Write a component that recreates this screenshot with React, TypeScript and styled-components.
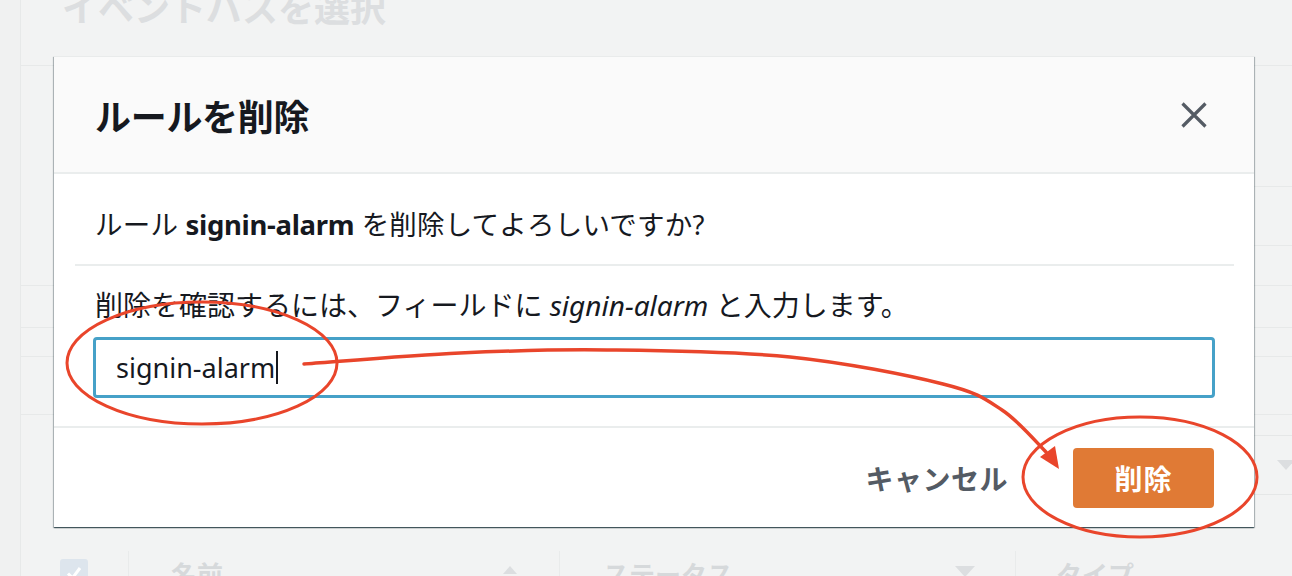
import React from "react";
import styled, { createGlobalStyle } from "styled-components";

const GlobalStyle = createGlobalStyle`
  html, body { margin: 0; padding: 0; }
  body {
    background: #f2f3f3;
    font-family: "Noto Sans", "Noto Sans CJK JP", sans-serif;
    color: #16191f;
  }
  * { box-sizing: border-box; }
`;

const Stage = styled.div`
  position: relative;
  width: 1292px;
  height: 576px;
  overflow: hidden;
  background: #f2f3f3;
`;

/* ---------- faded page behind the dialog ---------- */
const Backdrop = styled.div`
  display: flex;
  height: 100%;
`;

const Rail = styled.div`
  width: 21px;
  flex: none;
  background: #f0f1f1;
  border-right: 1px solid #e7e9e9;
`;

const Content = styled.div`
  flex: 1;
  display: flex;
  flex-direction: column;
  min-width: 0;
`;

const Card = styled.section<{ $h?: number; $top?: boolean }>`
  display: flex;
  flex-direction: column;
  ${(p) => (p.$h ? `height: ${p.$h}px; flex: none;` : "flex: 1;")}
  border-bottom: ${(p) => (p.$top ? "1px solid #e7e9e9" : "none")};
  border-top: ${(p) => (p.$top ? "none" : "1px solid #e7e9e9")};
`;

const CardGap = styled.div`
  height: 41px;
  flex: none;
`;

const FadedTitle = styled.div`
  flex: none;
  border-bottom: 1px solid #e7e9e9;
  padding-left: 41px;
  font-family: "Noto Sans CJK JP", sans-serif;
  font-weight: 700;
  font-size: 36px;
  line-height: 40px;
  color: #dcdee0;
  margin-top: -14px;
  height: 80px;
`;

const FadedRow = styled.div<{ $h: number; $inset?: number }>`
  height: ${(p) => p.$h}px;
  flex: none;
  margin-left: ${(p) => p.$inset ?? 40}px;
  border-bottom: 1px solid #e7e9e9;
`;

const Toolbar = styled.div`
  display: flex;
  justify-content: flex-end;
  padding-top: 20px;
  height: 136px;
  flex: none;
`;

const FadedSelect = styled.div`
  width: 600px;
  height: 60px;
  margin-right: -40px;
  border: 1px solid #e5e7e7;
  display: flex;
  align-items: center;
  justify-content: flex-end;
  padding-right: 36px;
`;

const Caret = styled.span<{ $up?: boolean; $size?: number }>`
  width: 0;
  height: 0;
  border-left: ${(p) => (p.$size ?? 9)}px solid transparent;
  border-right: ${(p) => (p.$size ?? 9)}px solid transparent;
  ${(p) =>
    p.$up
      ? `border-bottom: ${Math.round((p.$size ?? 9) * 1.1)}px solid #dcdee0;`
      : `border-top: ${Math.round((p.$size ?? 9) * 1.1)}px solid #dcdee0;`}
`;

const TableHead = styled.div`
  display: flex;
  flex: 1;
`;

const HeadCell = styled.div<{ $w?: number; $pl: number; $pr?: number; $divider?: boolean }>`
  ${(p) => (p.$w ? `width: ${p.$w}px; flex: none;` : "flex: 1;")}
  padding: 8px ${(p) => p.$pr ?? 0}px 0 ${(p) => p.$pl}px;
  border-left: ${(p) => (p.$divider ? "1px solid #e9ebeb" : "none")};
  display: flex;
  align-items: flex-start;
  justify-content: space-between;
  font-family: "Noto Sans CJK JP", sans-serif;
  font-weight: 700;
  font-size: 26px;
  line-height: 30px;
  color: #d6d9db;
`;

const CaretSlot = styled.span`
  padding-top: 7px;
  display: flex;
`;

const FadedCheck = styled.span`
  width: 28px;
  height: 28px;
  border-radius: 3px;
  background: #dde5ed;
  display: flex;
  align-items: center;
  justify-content: center;
`;

/* ---------- dialog ---------- */
const Modal = styled.div`
  position: absolute;
  left: 54px;
  top: 56px;
  width: 1200px;
  height: 471px;
  background: #fff;
  display: flex;
  flex-direction: column;
  border-top: 1px solid #e9ebeb;
  box-shadow: 0 1px 1px 0 rgba(0, 28, 36, 0.55), 1px 1px 1px 0 rgba(0, 28, 36, 0.22),
    -1px 1px 1px 0 rgba(0, 28, 36, 0.22);
`;

const ModalHeader = styled.header`
  height: 117px;
  flex: none;
  background: #fafafa;
  border-bottom: 2px solid #eaeded;
  display: flex;
  align-items: center;
  justify-content: space-between;
  padding: 0 47px 0 41px;
`;

const ModalTitle = styled.h2`
  margin: 0;
  font-family: "Noto Sans CJK JP", sans-serif;
  font-weight: 700;
  font-size: 36px;
  line-height: 44px;
  color: #16191f;
  letter-spacing: -0.3px;
`;

const CloseButton = styled.button`
  border: 0;
  padding: 0;
  background: transparent;
  width: 26px;
  height: 26px;
  display: flex;
`;

const ModalBody = styled.div`
  padding: 0 20px 0 21px;
  display: flex;
  flex-direction: column;
`;

const Question = styled.div`
  height: 92px;
  border-bottom: 2px solid #eaeded;
  padding: 33px 0 0 20px;
  font-size: 27.5px;
  line-height: 36px;
  letter-spacing: 0.2px;
  color: #16191f;
`;

const Strong = styled.b`
  font-weight: 700;
  letter-spacing: -0.3px;
`;

const ConfirmBlock = styled.div`
  padding: 21px 0 28px 18px;
  display: flex;
  flex-direction: column;
`;

const ConfirmLabel = styled.div`
  padding-left: 2px;
  font-size: 28px;
  line-height: 36px;
  color: #16191f;
`;

const Em = styled.i`
  font-style: italic;
`;

const InputBox = styled.div`
  margin-top: 14px;
  width: 1122px;
  height: 61px;
  border: 3px solid #46a1c8;
  border-radius: 4px;
  padding-left: 20px;
  display: flex;
  align-items: center;
  font-size: 27px;
  color: #16191f;
`;

const TextCaret = styled.span`
  width: 1.5px;
  height: 33px;
  background: #16191f;
  margin-left: 1px;
`;

const ModalFooter = styled.footer`
  flex: 1;
  border-top: 2px solid #eaeded;
  display: flex;
  align-items: center;
  justify-content: flex-end;
  gap: 43px;
  padding: 0 40px 0 0;
`;

const LinkButton = styled.button`
  border: 0;
  background: transparent;
  padding: 0 22px;
  height: 60px;
  font-family: "Noto Sans CJK JP", sans-serif;
  font-weight: 700;
  font-size: 28px;
  letter-spacing: 0.5px;
  color: #545b64;
`;

const PrimaryButton = styled.button`
  border: 0;
  border-radius: 4px;
  width: 141px;
  height: 60px;
  background: #e07a35;
  color: #fff;
  font-family: "Noto Sans CJK JP", sans-serif;
  font-weight: 700;
  font-size: 28px;
  letter-spacing: 1px;
`;

/* ---------- hand-drawn red annotations ---------- */
const Annotations = styled.svg`
  position: absolute;
  left: 0;
  top: 0;
  pointer-events: none;
`;

const RED = "#e9452b";

const curvePoints: [number, number][] = [
  [304, 364],
  [460, 353],
  [607, 350],
  [790, 357],
  [943, 384],
  [1002, 410],
  [1046, 452],
];

function catmullRom(pts: [number, number][]) {
  let d = `M ${pts[0][0]} ${pts[0][1]}`;
  for (let i = 0; i < pts.length - 1; i++) {
    const p0 = pts[Math.max(0, i - 1)];
    const p1 = pts[i];
    const p2 = pts[i + 1];
    const p3 = pts[Math.min(pts.length - 1, i + 2)];
    const c1x = p1[0] + (p2[0] - p0[0]) / 6;
    const c1y = p1[1] + (p2[1] - p0[1]) / 6;
    const c2x = p2[0] - (p3[0] - p1[0]) / 6;
    const c2y = p2[1] - (p3[1] - p1[1]) / 6;
    d += ` C ${c1x.toFixed(1)} ${c1y.toFixed(1)}, ${c2x.toFixed(1)} ${c2y.toFixed(1)}, ${p2[0]} ${p2[1]}`;
  }
  return d;
}

export default function App() {
  return (
    <>
      <GlobalStyle />
      <Stage>
        <Backdrop>
          <Rail />
          <Content>
            <Card $h={286} $top>
              <FadedTitle>イベントバスを選択</FadedTitle>
              <FadedRow $h={121} />
              <FadedRow $h={59} />
            </Card>
            <CardGap />
            <Card>
              <FadedRow $h={29} $inset={0} />
              <FadedRow $h={58} $inset={0} />
              <Toolbar>
                <FadedSelect>
                  <Caret $size={9} />
                </FadedSelect>
              </Toolbar>
              <TableHead>
                <HeadCell $w={107} $pl={39}>
                  <FadedCheck>
                    <svg width="18" height="18" viewBox="0 0 18 18">
                      <path d="M3 9.5 L7.5 14 L15 4" fill="none" stroke="#fff" strokeWidth="3" />
                    </svg>
                  </FadedCheck>
                </HeadCell>
                <HeadCell $w={431} $pl={42} $pr={42} $divider>
                  <span>名前</span>
                  <CaretSlot>
                    <Caret $up $size={7} />
                  </CaretSlot>
                </HeadCell>
                <HeadCell $w={456} $pl={43} $pr={40} $divider>
                  <span>ステータス</span>
                  <CaretSlot>
                    <Caret $size={10} />
                  </CaretSlot>
                </HeadCell>
                <HeadCell $pl={40} $divider>
                  <span>タイプ</span>
                </HeadCell>
              </TableHead>
            </Card>
          </Content>
        </Backdrop>

        <Modal>
          <ModalHeader>
            <ModalTitle>ルールを削除</ModalTitle>
            <CloseButton aria-label="閉じる">
              <svg width="26" height="26" viewBox="0 0 26 26">
                <path d="M1.5 1.5 L24.5 24.5 M24.5 1.5 L1.5 24.5" stroke="#545b64" strokeWidth="3.2" fill="none" />
              </svg>
            </CloseButton>
          </ModalHeader>
          <ModalBody>
            <Question>
              ルール <Strong>signin-alarm</Strong> を削除してよろしいですか?
            </Question>
            <ConfirmBlock>
              <ConfirmLabel>
                削除を確認するには、フィールドに <Em>signin-alarm</Em> と入力します。
              </ConfirmLabel>
              <InputBox>
                signin-alarm
                <TextCaret />
              </InputBox>
            </ConfirmBlock>
          </ModalBody>
          <ModalFooter>
            <LinkButton>キャンセル</LinkButton>
            <PrimaryButton>削除</PrimaryButton>
          </ModalFooter>
        </Modal>

        <Annotations width="1292" height="576" viewBox="0 0 1292 576">
          <ellipse cx="202" cy="363" rx="135" ry="61" fill="none" stroke={RED} strokeWidth="3" />
          <ellipse cx="1140" cy="477" rx="117" ry="60" fill="none" stroke={RED} strokeWidth="3" />
          <path d={catmullRom(curvePoints)} fill="none" stroke={RED} strokeWidth="3.5" strokeLinecap="round" />
          <polygon points="1059,469 1040,457 1055,446" fill={RED} />
        </Annotations>
      </Stage>
    </>
  );
}
